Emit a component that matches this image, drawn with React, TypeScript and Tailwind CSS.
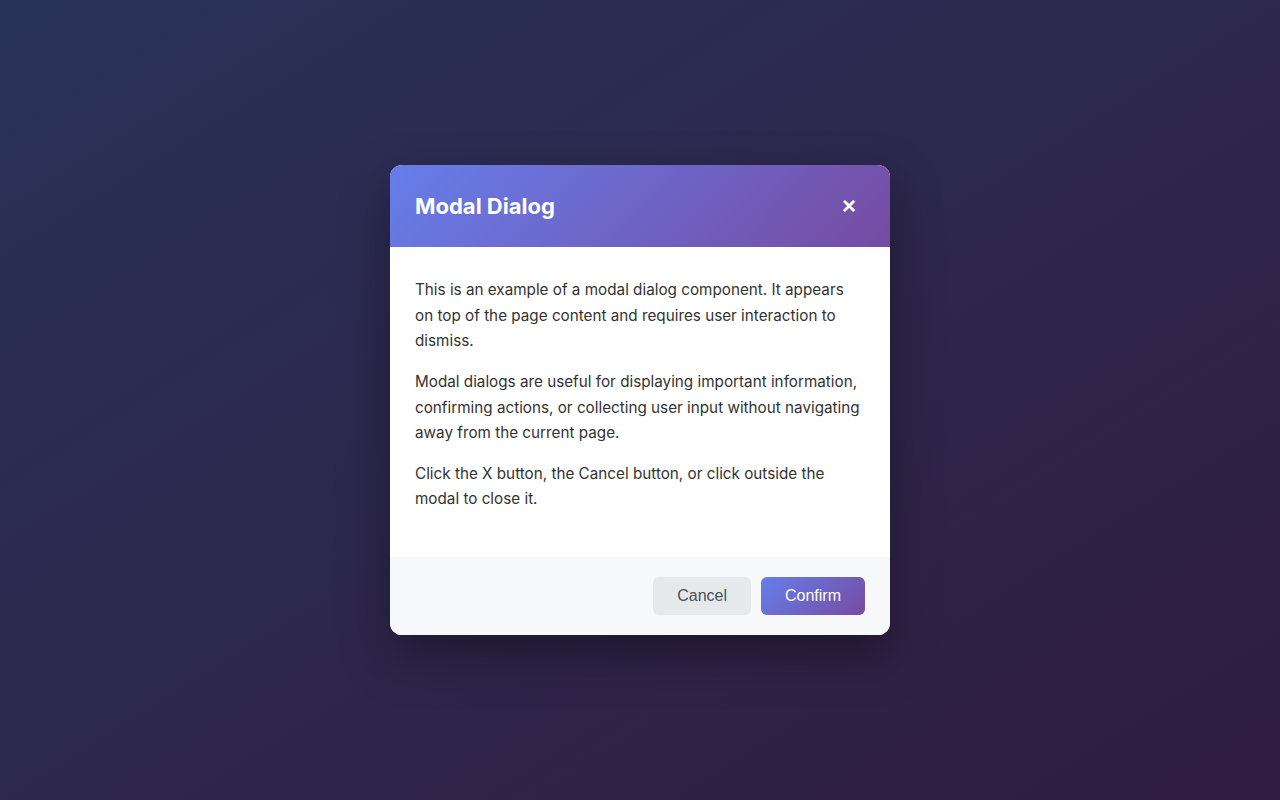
export default function App() {
  return (
    <div className="min-h-screen w-full bg-gradient-to-br from-[#283259] to-[#301c40] flex items-center justify-center font-['Inter',sans-serif]">
      {/* MODAL */}
      <div className="w-[500px] rounded-xl overflow-hidden bg-white shadow-[0_20px_50px_rgba(0,0,0,0.35)]">
        {/* HEADER */}
        <div className="h-[82px] px-[25px] flex items-center justify-between bg-[linear-gradient(135deg,#667eea_0%,#764ba2_100%)]">
          <h2 className="text-[22px] font-bold text-white">Modal Dialog</h2>
          <button className="w-8 h-8 flex items-center justify-center text-white text-[24px] font-bold leading-none font-['Liberation_Sans',sans-serif]">
            ×
          </button>
        </div>

        {/* BODY */}
        <div className="px-[25px] pt-[30px] pb-[30px] text-[15.25px] leading-[25.6px] text-[#333333]">
          <p className="mb-[15px]">
            This is an example of a modal dialog component. It appears on top of the page content and requires user
            interaction to dismiss.
          </p>
          <p className="mb-[15px]">
            Modal dialogs are useful for displaying important information, confirming actions, or collecting user input
            without navigating away from the current page.
          </p>
          <p className="mb-[15px]">Click the X button, the Cancel button, or click outside the modal to close it.</p>
        </div>

        {/* FOOTER */}
        <div className="bg-[#f7f8fa] px-[25px] py-5 flex justify-end gap-[10px] font-['Liberation_Sans',sans-serif]">
          <button className="h-[38px] px-6 rounded-md bg-[#e6e9ec] text-[#4a4f57] text-base">Cancel</button>
          <button className="h-[38px] px-6 rounded-md bg-[linear-gradient(135deg,#667eea_0%,#764ba2_100%)] text-white text-base">
            Confirm
          </button>
        </div>
      </div>
    </div>
  )
}
